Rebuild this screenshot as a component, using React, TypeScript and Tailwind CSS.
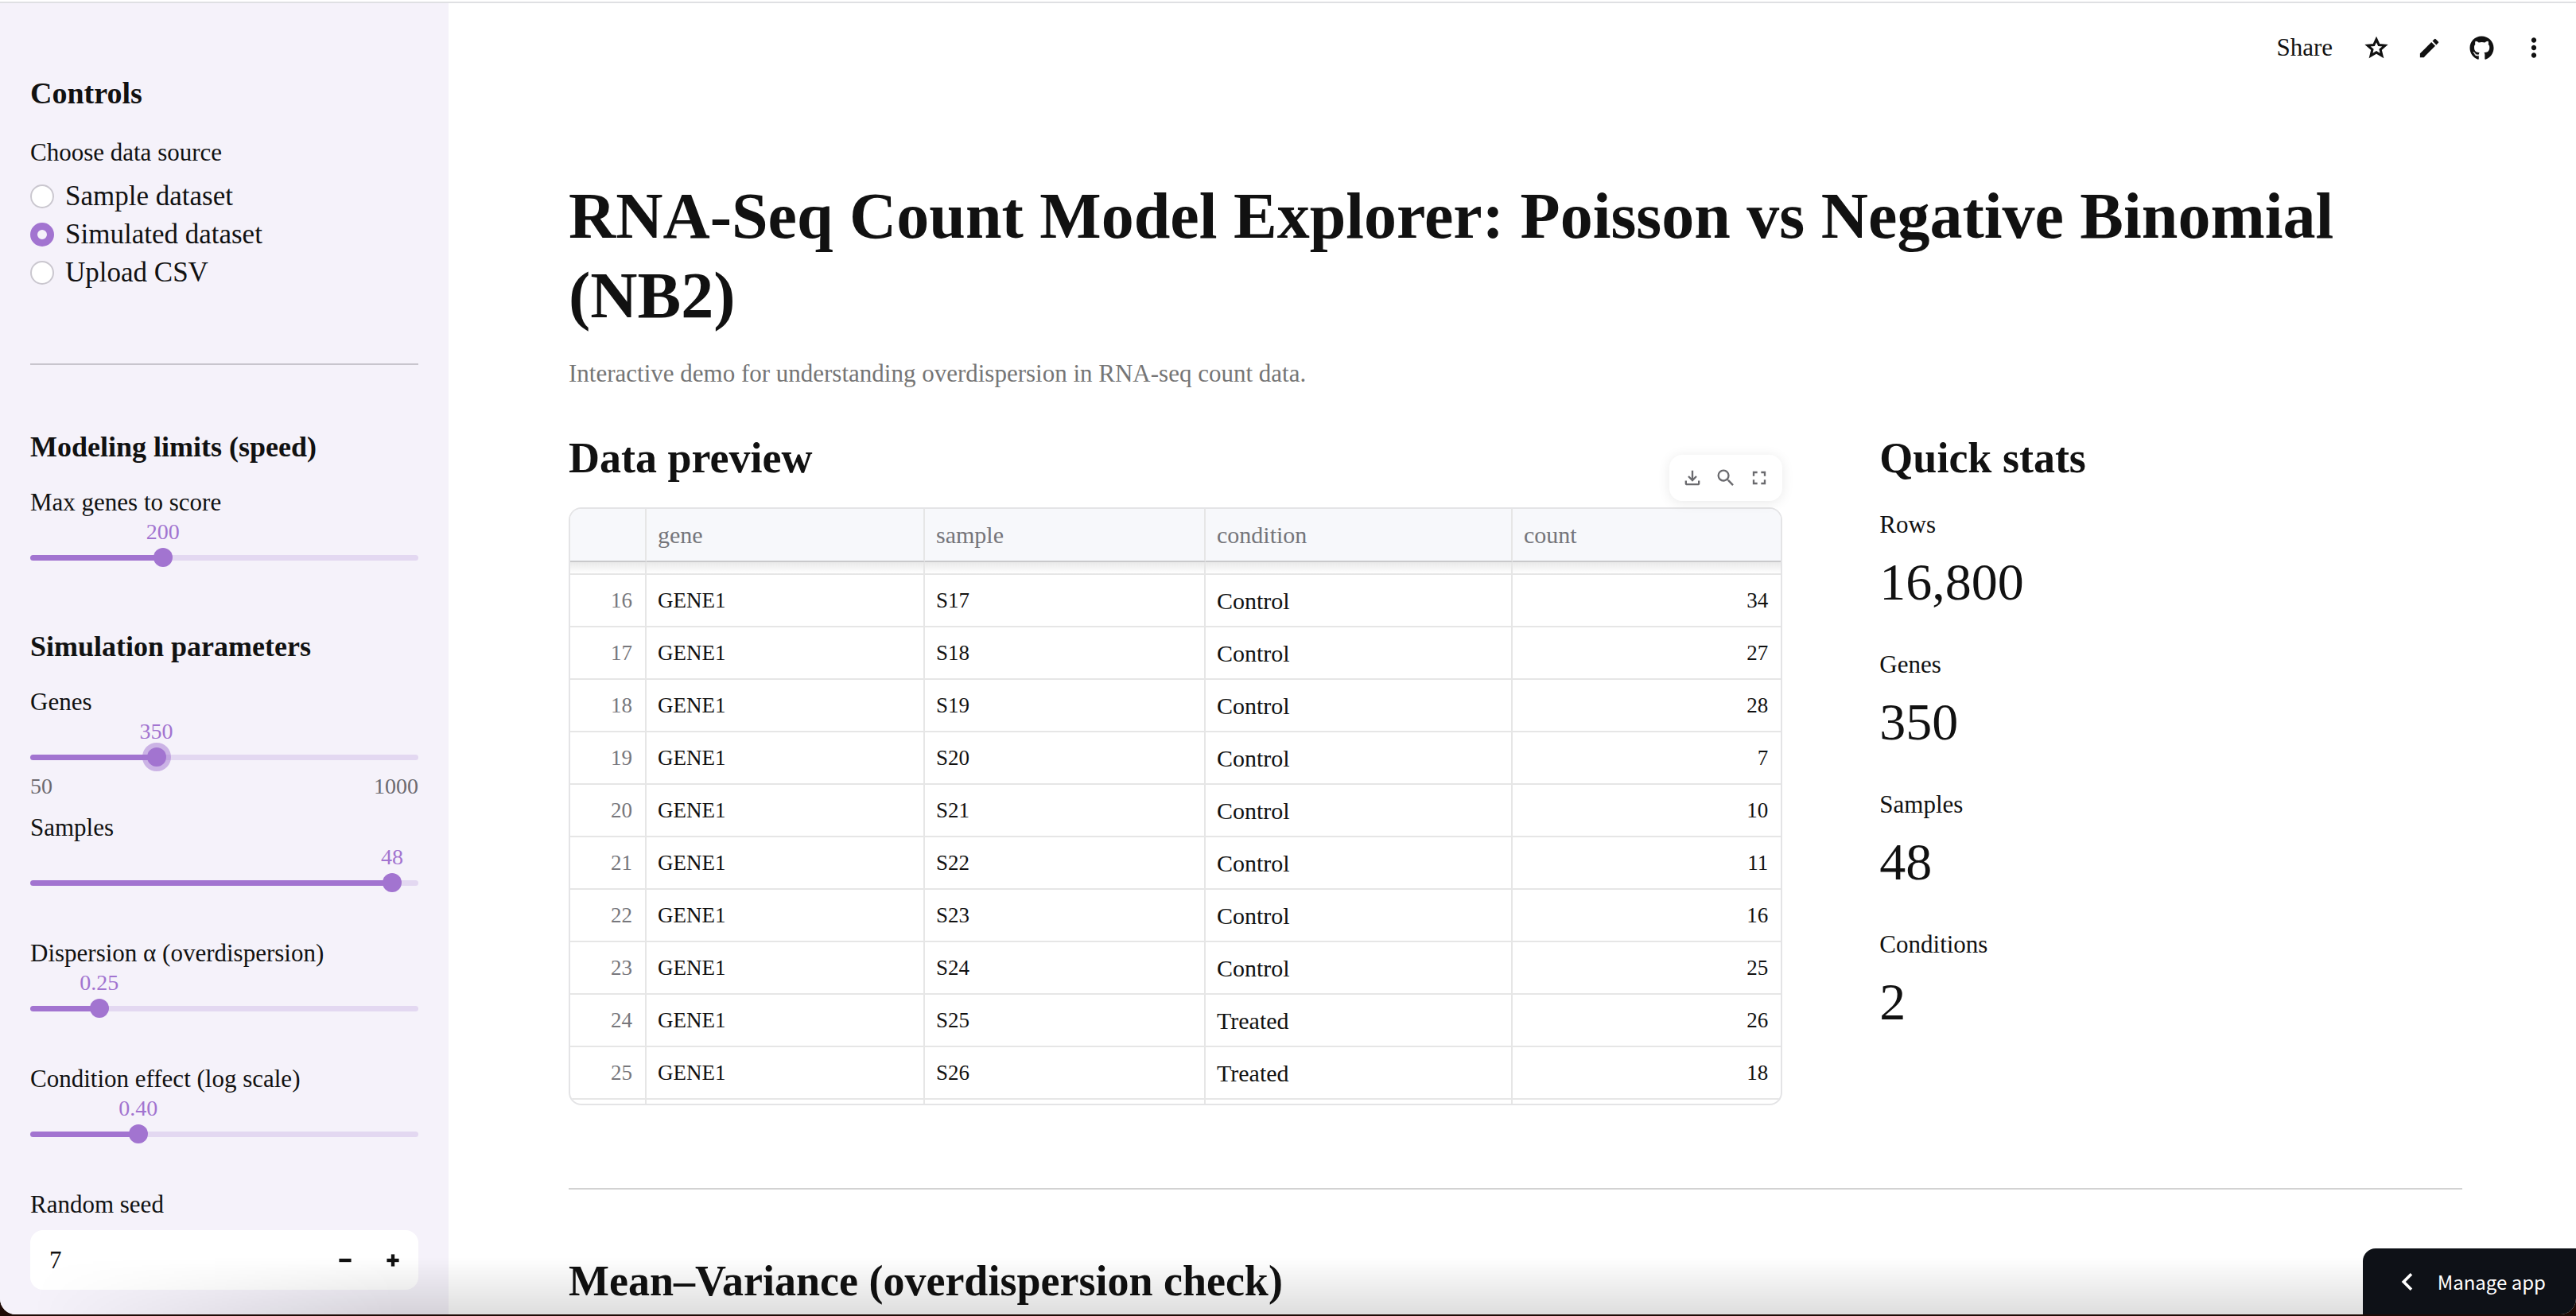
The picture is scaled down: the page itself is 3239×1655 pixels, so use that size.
import { useState } from "react";
import type { ReactNode } from "react";
import { Minus, Plus } from "lucide-react";
import { FaGithub } from "react-icons/fa";
import {
  MdChevronLeft,
  MdEdit,
  MdFullscreen,
  MdMoreVert,
  MdOutlineFileDownload,
  MdSearch,
} from "react-icons/md";

// ─────────────────────────────────────────────
// Data
// ─────────────────────────────────────────────

interface PreviewRow {
  index: number;
  gene: string;
  sample: string;
  condition: string;
  count: number;
}

const counts = [34, 27, 28, 7, 10, 11, 16, 25, 26, 18];

const rows: PreviewRow[] = counts.map((count, i) => ({
  index: 16 + i,
  gene: "GENE1",
  sample: `S${17 + i}`,
  condition: 17 + i > 24 ? "Treated" : "Control",
  count,
}));

const stats = [
  { label: "Rows", value: "16,800" },
  { label: "Genes", value: "350" },
  { label: "Samples", value: "48" },
  { label: "Conditions", value: "2" },
];

const sources = ["Sample dataset", "Simulated dataset", "Upload CSV"];

// ─────────────────────────────────────────────
// Slider
// ─────────────────────────────────────────────

interface SliderProps {
  id: string;
  label: string;
  min: number;
  max: number;
  step?: number;
  initial: number;
  digits?: number;
  active?: boolean;
}

const THUMB = 24;

function Slider({ id, label, min, max, step = 1, initial, digits = 0, active = false }: SliderProps) {
  const [value, setValue] = useState(initial);
  const ratio = (value - min) / (max - min);
  // Centre of the thumb, which stays inside the track at both ends
  const center = `calc(${THUMB / 2}px + (100% - ${THUMB}px) * ${ratio})`;

  return (
    <div className="mb-[14px]">
      <label htmlFor={id} className="block text-[31px] leading-[40px]">
        {label}
      </label>
      <div className="relative mt-px h-8 text-[28px] leading-8 text-[#a274d0]">
        <output htmlFor={id} className="absolute -translate-x-1/2" style={{ left: center }}>
          {value.toFixed(digits)}
        </output>
      </div>
      <div className="mt-1 flex h-6 items-center">
        <input
          id={id}
          type="range"
          min={min}
          max={max}
          step={step}
          value={value}
          onChange={(e) => setValue(Number(e.target.value))}
          className={`h-[7px] w-full cursor-pointer appearance-none rounded-full outline-none [&::-webkit-slider-thumb]:size-6 [&::-webkit-slider-thumb]:appearance-none [&::-webkit-slider-thumb]:rounded-full [&::-webkit-slider-thumb]:bg-[#a274d0] ${
            active ? "[&::-webkit-slider-thumb]:shadow-[0_0_0_6px_#a274d080]" : ""
          }`}
          style={{
            backgroundImage: `linear-gradient(to right, #a274d0 ${center}, #e3d8f1 ${center})`,
          }}
        />
      </div>
      <div className="mt-[7px] flex h-9 justify-between text-[28px] leading-9 text-[#6c6a70]">
        {active && (
          <>
            <span>{min}</span>
            <span>{max}</span>
          </>
        )}
      </div>
    </div>
  );
}

// ─────────────────────────────────────────────
// Sidebar
// ─────────────────────────────────────────────

function Sidebar() {
  const [source, setSource] = useState(sources[1]);
  const [seed, setSeed] = useState(7);

  return (
    <aside className="w-[564px] shrink-0 overflow-hidden bg-[#f5f2fa] px-[38px] pt-[89px]">
      <h2 className="text-[38px] leading-[48px] font-bold">Controls</h2>

      <fieldset className="mt-[31px]">
        <legend className="text-[31px] leading-[40px]">Choose data source</legend>
        <div className="pt-[11px]">
          {sources.map((name) => (
            <label key={name} className="flex h-12 cursor-pointer items-center gap-[14px] text-[35px] leading-[48px]">
              <input
                type="radio"
                name="source"
                checked={source === name}
                onChange={() => setSource(name)}
                className="size-[30px] appearance-none rounded-full border-2 border-[#cac7cf] bg-white checked:border-[9px] checked:border-[#a274d0] checked:bg-[#f5f2fa]"
              />
              {name}
            </label>
          ))}
        </div>
      </fieldset>

      <hr className="mt-[90px] border-t-2 border-[#c8c5cd]" />

      <h3 className="mt-[81px] mb-7 text-[36px] leading-[44px] font-bold">Modeling limits (speed)</h3>
      <Slider id="max-genes" label="Max genes to score" min={50} max={500} initial={200} />

      <h3 className="mt-[35px] mb-7 text-[36px] leading-[44px] font-bold">Simulation parameters</h3>
      <Slider id="genes" label="Genes" min={50} max={1000} initial={350} active />
      <Slider id="samples" label="Samples" min={6} max={50} initial={48} />
      <Slider
        id="dispersion"
        label="Dispersion α (overdispersion)"
        min={0.01}
        max={1.5}
        step={0.01}
        initial={0.25}
        digits={2}
      />
      <Slider
        id="effect"
        label="Condition effect (log scale)"
        min={0}
        max={1.5}
        step={0.05}
        initial={0.4}
        digits={2}
      />

      <label htmlFor="seed" className="block text-[31px] leading-[40px]">
        Random seed
      </label>
      <div className="mt-3 flex h-[75px] items-center rounded-2xl bg-white pr-[2px]">
        <input
          id="seed"
          type="text"
          inputMode="numeric"
          value={seed}
          onChange={(e) => setSeed(Number(e.target.value) || 0)}
          className="h-full min-w-0 flex-1 bg-transparent pl-6 text-[31px] outline-none"
        />
        <button
          type="button"
          aria-label="Decrease seed"
          onClick={() => setSeed(seed - 1)}
          className="flex h-full w-[60px] items-center justify-center"
        >
          <Minus size={26} strokeWidth={4} strokeLinecap="butt" />
        </button>
        <button
          type="button"
          aria-label="Increase seed"
          onClick={() => setSeed(seed + 1)}
          className="flex h-full w-[60px] items-center justify-center"
        >
          <Plus size={26} strokeWidth={4} strokeLinecap="butt" />
        </button>
      </div>
    </aside>
  );
}

// ─────────────────────────────────────────────
// Header
// ─────────────────────────────────────────────

function StarIcon() {
  return (
    <svg width="34" height="34" viewBox="0 0 24 24" fill="none" stroke="currentColor" strokeWidth="2.2">
      <path d="M12 4.6 14.3 9.6 19.7 10.1 15.6 13.7 16.9 19.1 12 16.1 7.1 19.1 8.4 13.7 4.3 10.1 9.7 9.6Z" />
    </svg>
  );
}

function HeaderButton({ label, children }: { label: string; children: ReactNode }) {
  return (
    <button type="button" aria-label={label} className="flex h-[66px] w-[66px] items-center justify-center">
      {children}
    </button>
  );
}

function Header() {
  return (
    <header className="flex h-[112px] items-center justify-end pr-5">
      <button type="button" className="mr-[22px] text-[31px] leading-[40px]">
        Share
      </button>
      <HeaderButton label="Favorite">
        <StarIcon />
      </HeaderButton>
      <HeaderButton label="Edit">
        <MdEdit size={31} />
      </HeaderButton>
      <HeaderButton label="View source">
        <FaGithub size={31} />
      </HeaderButton>
      <HeaderButton label="Menu">
        <MdMoreVert size={38} />
      </HeaderButton>
    </header>
  );
}

// ─────────────────────────────────────────────
// Data preview
// ─────────────────────────────────────────────

function DataPreview() {
  const head = "h-[67px] border-b-2 border-b-[#c9c9cb] bg-[#f7f8fb] pl-[14px] text-left text-[30px] font-normal text-[#75757a]";
  const line = "border-r-2 border-r-[#e6e6e6]";
  const cell = "h-[66px] border-b-2 border-b-[#e6e6e6]";

  return (
    <section>
      <h2 className="text-[54px] leading-[64px] font-bold">Data preview</h2>

      <div className="relative mt-[30px]">
        {/* Floating toolbar above the table's right corner */}
        <div className="absolute -top-[66px] right-0 flex h-[58px] items-center rounded-2xl bg-white px-2 text-[#6a6a6e] shadow-[0_2px_16px_rgba(0,0,0,0.09)]">
          <button type="button" aria-label="Download" className="flex w-[42px] justify-center">
            <MdOutlineFileDownload size={28} />
          </button>
          <button type="button" aria-label="Search" className="flex w-[42px] justify-center">
            <MdSearch size={28} />
          </button>
          <button type="button" aria-label="Fullscreen" className="flex w-[42px] justify-center">
            <MdFullscreen size={28} />
          </button>
        </div>

        <div className="h-[752px] overflow-hidden rounded-2xl border-2 border-[#e4e4e6]">
          <table className="w-full table-fixed border-separate border-spacing-0">
            <colgroup>
              <col className="w-[96px]" />
              <col className="w-[350px]" />
              <col className="w-[353px]" />
              <col className="w-[386px]" />
              <col />
            </colgroup>
            <thead>
              <tr>
                <th className={`${head} ${line}`} aria-label="index" />
                <th className={`${head} ${line}`}>gene</th>
                <th className={`${head} ${line}`}>sample</th>
                <th className={`${head} ${line}`}>condition</th>
                <th className={head}>count</th>
              </tr>
            </thead>
            <tbody>
              {/* Edge of the row scrolled under the header */}
              <tr aria-hidden="true">
                {[0, 1, 2, 3, 4].map((i) => (
                  <td
                    key={i}
                    className={`h-4 border-b-2 border-b-[#e6e6e6] bg-gradient-to-b from-[#e9e9e9] to-white p-0 ${i < 4 ? line : ""}`}
                  />
                ))}
              </tr>
              {rows.map((row) => (
                <tr key={row.index} className="text-[27px]">
                  <td className={`${cell} ${line} pr-4 text-right text-[#77777c]`}>{row.index}</td>
                  <td className={`${cell} ${line} pl-[14px]`}>{row.gene}</td>
                  <td className={`${cell} ${line} pl-[14px]`}>{row.sample}</td>
                  <td className={`${cell} ${line} pl-[14px] text-[30px]`}>{row.condition}</td>
                  <td className={`${cell} pr-4 text-right`}>{row.count}</td>
                </tr>
              ))}
              <tr aria-hidden="true">
                {[0, 1, 2, 3, 4].map((i) => (
                  <td key={i} className={`h-4 p-0 ${i < 4 ? line : ""}`} />
                ))}
              </tr>
            </tbody>
          </table>
        </div>
      </div>
    </section>
  );
}

// ─────────────────────────────────────────────
// Quick stats
// ─────────────────────────────────────────────

function QuickStats() {
  return (
    <section>
      <h2 className="text-[54px] leading-[64px] font-bold">Quick stats</h2>
      <dl className="mt-8 flex flex-col gap-11">
        {stats.map((stat) => (
          <div key={stat.label}>
            <dt className="text-[31px] leading-[40px]">{stat.label}</dt>
            <dd className="mt-3 text-[66px] leading-[80px]">{stat.value}</dd>
          </div>
        ))}
      </dl>
    </section>
  );
}

// ─────────────────────────────────────────────
// App
// ─────────────────────────────────────────────

export default function App() {
  return (
    <div className="h-screen overflow-hidden bg-[#1f0b06] pb-[2px] font-['Liberation_Serif',serif] text-[#111]">
      <div className="relative flex h-full flex-col overflow-hidden rounded-b-[20px] bg-white">
        <div className="mt-[2px] h-[2px] shrink-0 bg-[#dfe0e3]" />

        <div className="flex min-h-0 flex-1">
          <Sidebar />

          <div className="min-w-0 flex-1 overflow-hidden">
            <Header />
            <main className="pt-[106px] pr-[143px] pl-[151px]">
              <h1 className="text-[82px] leading-[100px] font-bold">
                RNA-Seq Count Model Explorer: Poisson vs Negative Binomial (NB2)
              </h1>
              <p className="mt-7 text-[31px] leading-[40px] text-[#757575]">
                Interactive demo for understanding overdispersion in RNA-seq count data.
              </p>

              <div className="mt-[54px] grid grid-cols-[25fr_12fr] gap-[122px]">
                <DataPreview />
                <QuickStats />
              </div>

              <hr className="mt-[104px] border-t-2 border-[#d2d2d2]" />

              <h2 className="mt-[83px] text-[54px] leading-[64px] font-bold">
                Mean–Variance (overdispersion check)
              </h2>
            </main>
          </div>
        </div>

        {/* Shade along the bottom edge of the window */}
        <div className="pointer-events-none absolute inset-x-0 bottom-0 h-[72px] bg-gradient-to-t from-black/13 to-transparent [mask-image:linear-gradient(to_right,transparent_40px,black_500px)]" />

        <button
          type="button"
          className="absolute right-0 bottom-0 flex h-[83px] items-center gap-4 rounded-tl-[16px] bg-[#0e1117] pr-[38px] pl-[34px] font-['Noto_Sans_CJK_SC',sans-serif] text-[24px] leading-8 text-white"
        >
          <MdChevronLeft size={44} />
          Manage app
        </button>
      </div>
    </div>
  );
}
